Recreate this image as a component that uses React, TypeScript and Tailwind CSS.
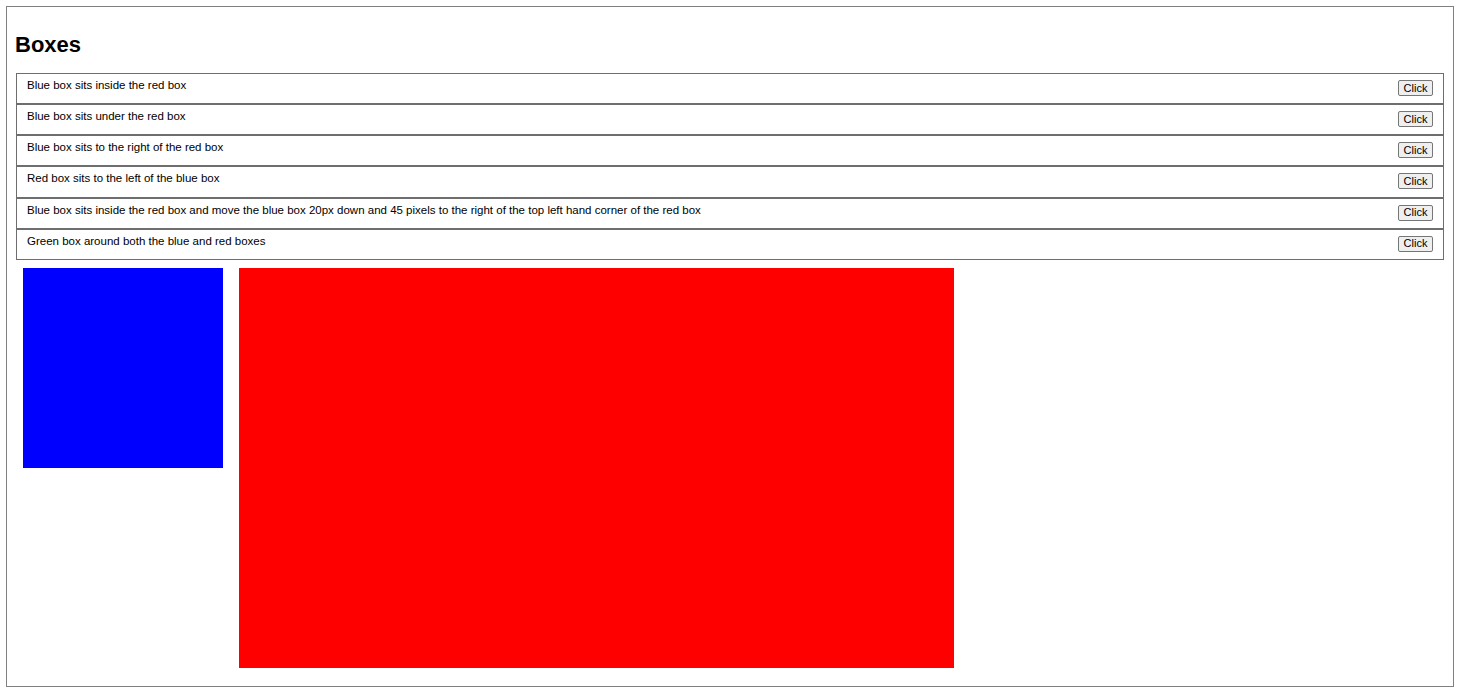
import React from 'react'

const rows = [
  'Blue box sits inside the red box',
  'Blue box sits under the red box',
  'Blue box sits to the right of the red box',
  'Red box sits to the left of the blue box',
  'Blue box sits inside the red box and move the blue box 20px down and 45 pixels to the right of the top left hand corner of the red box',
  'Green box around both the blue and red boxes',
]

export default function App() {
  return (
    <div className="bg-white min-h-screen pt-[6px] pl-[6px] font-['Liberation_Sans',Arial,sans-serif] text-black">
      <div className="w-[1448px] h-[681px] border border-[#808080] px-[9px]">
        <h1 className="text-[22px] font-bold leading-[26px] mt-[25px] mb-[15px] -ml-[1px]">Boxes</h1>
        <div className="flex flex-col">
          {rows.map((r) => (
            <div
              key={r}
              className="flex items-start justify-between border border-[#6e6e6e] h-[31.17px] pl-[10px] pr-[10px] pt-[4px]"
            >
              <span className="text-[11.5px] leading-[15px]">{r}</span>
              <button className="mt-[2px] h-[16px] w-[35px] text-[11px] leading-[13px] border border-[#767676] rounded-[2px] bg-[#efefef]">
                Click
              </button>
            </div>
          ))}
        </div>
        <div className="flex items-start gap-[16px] mt-[8px] pl-[7px]">
          <div className="w-[200px] h-[200px] bg-[#0000ff]" />
          <div className="w-[715px] h-[400px] bg-[#ff0000]" />
        </div>
      </div>
    </div>
  )
}
